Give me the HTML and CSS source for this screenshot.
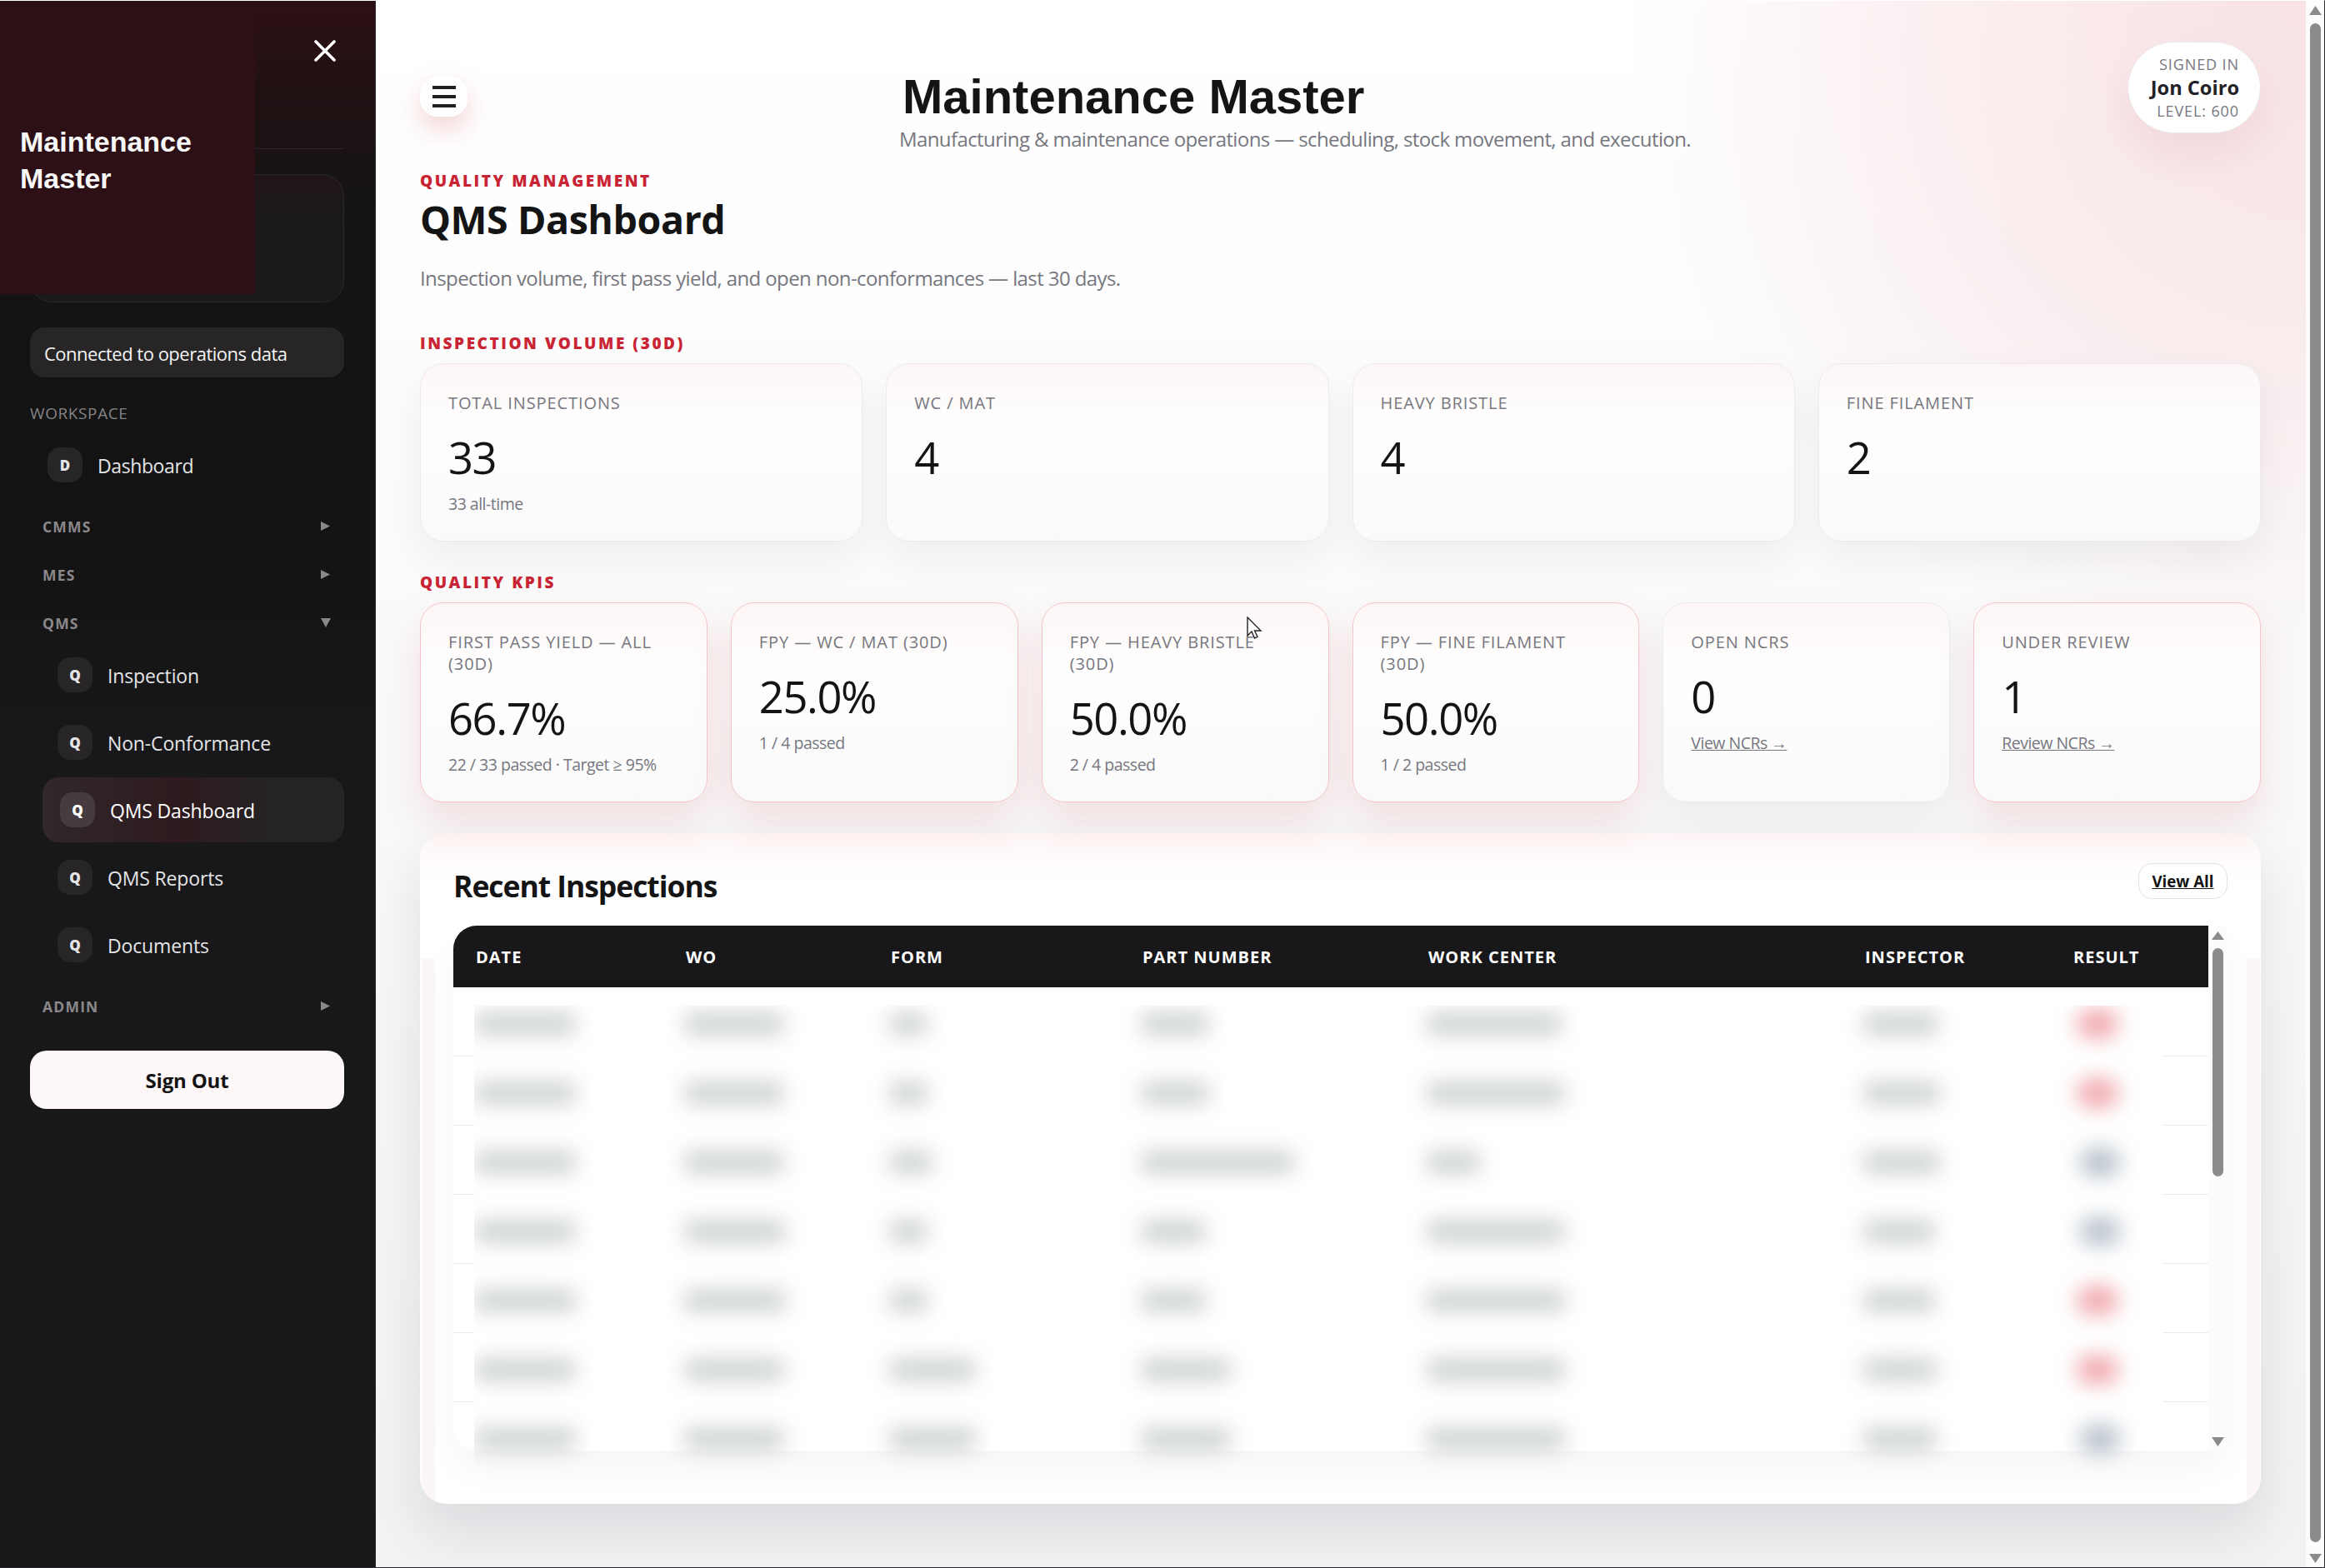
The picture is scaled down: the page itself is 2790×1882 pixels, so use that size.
FILE: index.html
```html
<!DOCTYPE html>
<html lang="en">
<head>
    <meta charset="UTF-8">
    <meta name="viewport" content="width=device-width, initial-scale=1.0">
    <title>QMS Dashboard</title>
    <link rel="stylesheet" href="styles.css">
</head>
<body>
    <aside class="sidebar">
        <div class="sidebar-head">
            <svg class="close" width="26" height="26" viewBox="0 0 26 26"><path d="M2 2L24 24M24 2L2 24"/></svg>
        </div>
        <div class="sidebar-card"></div>
        <div class="brand">Maintenance Master</div>
        <div class="status">Connected to operations data</div>
        <div class="nav-title">WORKSPACE</div>
        <a class="nav-item top"><span class="badge">D</span><span>Dashboard</span></a>
        <div class="nav-group"><span>CMMS</span><svg width="12" height="12"><path d="M0 0L11 5.5L0 11Z"/></svg></div>
        <div class="nav-group"><span>MES</span><svg width="12" height="12"><path d="M0 0L11 5.5L0 11Z"/></svg></div>
        <div class="nav-group"><span>QMS</span><svg width="12" height="12"><path d="M0 0H12L6 11Z"/></svg></div>
        <nav class="nav-list">
            <a class="nav-item"><span class="badge">Q</span><span>Inspection</span></a>
            <a class="nav-item"><span class="badge">Q</span><span>Non-Conformance</span></a>
            <a class="nav-item active"><span class="badge">Q</span><span>QMS Dashboard</span></a>
            <a class="nav-item"><span class="badge">Q</span><span>QMS Reports</span></a>
            <a class="nav-item"><span class="badge">Q</span><span>Documents</span></a>
        </nav>
        <div class="nav-group"><span>ADMIN</span><svg width="12" height="12"><path d="M0 0L11 5.5L0 11Z"/></svg></div>
        <button class="sign-out">Sign Out</button>
    </aside>

    <main class="main">
        <header class="topbar">
            <button class="menu"><span></span><span></span><span></span></button>
            <div class="heading">
                <h1>Maintenance Master</h1>
                <p>Manufacturing &amp; maintenance operations — scheduling, stock movement, and execution.</p>
            </div>
            <div class="user">
                <small>SIGNED IN</small>
                <b>Jon Coiro</b>
                <small>LEVEL: 600</small>
            </div>
        </header>

        <div class="kicker">QUALITY MANAGEMENT</div>
        <h2>QMS Dashboard</h2>
        <p class="lead">Inspection volume, first pass yield, and open non-conformances — last 30 days.</p>

        <div class="kicker volume">INSPECTION VOLUME (30D)</div>
        <section class="cards four">
            <div class="card"><label>TOTAL INSPECTIONS</label><strong>33</strong><em>33 all-time</em></div>
            <div class="card"><label>WC / MAT</label><strong>4</strong></div>
            <div class="card"><label>HEAVY BRISTLE</label><strong>4</strong></div>
            <div class="card"><label>FINE FILAMENT</label><strong>2</strong></div>
        </section>

        <div class="kicker kpis">QUALITY KPIS</div>
        <section class="cards six">
            <div class="card warn"><label>FIRST PASS YIELD — ALL (30D)</label><strong>66.7%</strong><em>22 / 33 passed · Target ≥ 95%</em></div>
            <div class="card warn"><label>FPY — WC / MAT (30D)</label><strong>25.0%</strong><em>1 / 4 passed</em></div>
            <div class="card warn"><label>FPY — HEAVY BRISTLE (30D)</label><strong>50.0%</strong><em>2 / 4 passed</em></div>
            <div class="card warn"><label>FPY — FINE FILAMENT (30D)</label><strong>50.0%</strong><em>1 / 2 passed</em></div>
            <div class="card"><label>OPEN NCRS</label><strong>0</strong><em><a>View NCRs →</a></em></div>
            <div class="card warn"><label>UNDER REVIEW</label><strong>1</strong><em><a>Review NCRs →</a></em></div>
        </section>

        <section class="panel">
            <div class="panel-head">
                <h3>Recent Inspections</h3>
                <a class="view-all">View All</a>
            </div>
            <div class="table-wrap">
                <div class="table">
                    <div class="row head">
                        <span>DATE</span><span>WO</span><span>FORM</span><span>PART NUMBER</span><span>WORK CENTER</span><span>INSPECTOR</span><span>RESULT</span>
                    </div>
                    <div class="table-body">
                        <div class="redacted" id="rows"></div>
                    </div>
                </div>
                <div class="scroll inner">
                    <svg width="15" height="11"><path d="M7.5 0L15 10H0Z"/></svg>
                    <i></i>
                    <svg width="15" height="11"><path d="M7.5 11L15 0H0Z"/></svg>
                </div>
            </div>
        </section>
    </main>

    <div class="scroll page">
        <svg width="15" height="11"><path d="M7.5 0L15 11H0Z"/></svg>
        <i></i>
        <svg width="15" height="11"><path d="M7.5 11L15 0H0Z"/></svg>
    </div>

    <svg class="cursor" width="20" height="28" viewBox="0 0 20 28"><path d="M1 1V23L6 18L9.5 26L13 24.5L9.5 17H17Z"/></svg>

    <script>
        // bar widths per column, last value is the result pill
        const rows = [
            [122, 120, 46, 82, 162, 90, 'fail'],
            [122, 120, 46, 82, 166, 92, 'fail'],
            [122, 120, 52, 184, 64, 92, 'pass'],
            [122, 122, 46, 78, 166, 86, 'pass'],
            [122, 122, 46, 78, 166, 86, 'fail'],
            [122, 120, 104, 108, 166, 88, 'fail'],
            [122, 120, 104, 108, 166, 88, 'pass']
        ];

        const body = document.getElementById('rows');

        rows.forEach(row => {
            const div = document.createElement('div');
            div.classList.add('row');
            div.innerHTML = row.map(v => typeof v === 'number'
                ? `<span><i class="bar" style="width:${v}px"></i></span>`
                : `<span><i class="pill ${v}"></i></span>`).join('');
            body.appendChild(div);
        });
    </script>
</body>
</html>
```
FILE: styles.css
```css
* {
    box-sizing: border-box;
}
body {
    margin: 0;
    height: 1882px;
    display: flex;
    overflow: hidden;
    border-top: 1px solid #fff;
    border-right: 1px solid #2a2a2e;
    border-bottom: 1px solid #2a2a2e;
    font-family: "Open Sans", "Noto Sans", sans-serif;
    color: #141414;
    background: #fff;
}
h1, h2, h3, p {
    margin: 0;
}
button {
    border: none;
    padding: 0;
    font-family: inherit;
}

/* Sidebar */
.sidebar {
    position: relative;
    flex: 0 0 450px;
    padding: 0 37px 0 36px;
    border-right: 1px solid #2c2c2e;
    background: linear-gradient(180deg, #2d1015 0, #1f1113 120px, #141414 250px, #131313 660px, #18181a 900px, #18181a 100%);
}
.sidebar-head {
    height: 178px;
    border-bottom: 1px solid #2b2627;
    text-align: right;
}
.close {
    margin: 47px 10px 0 0;
    fill: none;
    stroke: #fff;
    stroke-width: 3.6;
    stroke-linecap: round;
}
.sidebar-card {
    height: 154px;
    margin-top: 30px;
    border: 1px solid #29292b;
    border-radius: 26px;
    background: linear-gradient(180deg, #21161a, #1a1a1c 40%);
}
.brand {
    position: absolute;
    left: 0;
    top: 0;
    width: 306px;
    height: 352px;
    padding: 147px 50px 0 24px;
    background: #2d1015;
    color: #f8f8f8;
    font: bold 34px/44px "Liberation Sans", Arial, sans-serif;
}
.status {
    height: 60px;
    margin-top: 30px;
    padding-left: 17px;
    border-radius: 18px;
    background: #272526;
    color: #f5f5f5;
    font-size: 22px;
    line-height: 62px;
    letter-spacing: -0.5px;
}
.nav-title {
    margin: 30px 0 10px;
    color: #858387;
    font-size: 19px;
    line-height: 26px;
    letter-spacing: 0.6px;
}
.nav-item {
    display: flex;
    align-items: center;
    gap: 18px;
    height: 78px;
    padding-left: 18px;
    border-radius: 20px;
    color: #e4e4e7;
    font-size: 23px;
    letter-spacing: -0.15px;
    white-space: nowrap;
}
.nav-item.top {
    padding-left: 21px;
    margin-bottom: 10px;
    letter-spacing: -0.4px;
}
.nav-item span + span {
    padding-top: 2px;
}
.badge {
    width: 42px;
    height: 42px;
    border-radius: 15px;
    background: #272526;
    font-size: 17px;
    font-weight: 800;
    line-height: 43px;
    letter-spacing: 0;
    text-align: center;
}
.nav-group {
    display: flex;
    align-items: center;
    justify-content: space-between;
    height: 48px;
    margin-bottom: 10px;
    padding: 1px 16px 0 15px;
    color: #8a888b;
    font-size: 17.5px;
    font-weight: 700;
    letter-spacing: 1.2px;
}
.nav-group svg {
    fill: #8a888b;
}
.nav-list {
    display: grid;
    gap: 3px;
    margin: -10px 0 10px 15px;
}
.nav-item.active {
    padding-left: 21px;
    background: linear-gradient(90deg, #30282a, #2e1a1e 45%, #252324 75%, #262526);
    color: #fff;
}
.active .badge {
    background: #463b3f;
}
.sign-out {
    width: 377px;
    height: 70px;
    margin-top: 20px;
    border-radius: 20px;
    background: #fdf7f7;
    color: #141414;
    font-size: 24px;
    font-weight: 700;
    letter-spacing: -0.2px;
}

/* Main */
.main {
    flex: 1;
    padding: 49px 54px 0 53px;
    background:
        radial-gradient(circle 820px at 100% 0, rgba(205, 50, 65, 0.14), rgba(205, 50, 65, 0.075) 55%, transparent),
        linear-gradient(180deg, #fff 0, #fbfbfb 600px, #f1f2f3 100%);
}
.topbar {
    display: flex;
    align-items: flex-start;
    height: 154px;
}
.menu {
    display: grid;
    gap: 7px;
    align-content: center;
    justify-content: center;
    width: 57px;
    height: 48px;
    margin-top: 42px;
    border-radius: 21px;
    background: #fff;
    box-shadow: 0 14px 32px rgba(201, 36, 52, 0.2);
}
.menu span {
    width: 28px;
    height: 4px;
    background: #202022;
}
.heading {
    margin: 33px 0 0 518px;
}
h1 {
    padding-left: 4px;
    font: bold 58px/66px "Liberation Sans", Arial, sans-serif;
}
.heading p, .lead {
    color: #77777f;
    font-size: 24px;
    line-height: 36px;
    letter-spacing: -0.6px;
    white-space: nowrap;
}
.user {
    display: grid;
    align-content: center;
    justify-items: end;
    width: 160px;
    height: 110px;
    margin-left: auto;
    padding-right: 25px;
    border: 1px solid #ebe6e7;
    border-radius: 55px;
    background: #fff;
    box-shadow: 0 24px 48px rgba(160, 30, 45, 0.08);
    line-height: 28px;
    white-space: nowrap;
}
.user small {
    color: #77777f;
    font-size: 18px;
    letter-spacing: 0.9px;
}
.user b {
    color: #222226;
    font-size: 23.6px;
}
.kicker {
    color: #c92434;
    font-size: 19px;
    font-weight: 800;
    line-height: 26px;
    letter-spacing: 2.55px;
}
h2 {
    margin-top: 3px;
    font-size: 46.5px;
    line-height: 60px;
    letter-spacing: -0.4px;
}
.lead {
    margin-top: 23px;
}
.kicker.volume {
    margin-top: 47px;
}
.kicker.kpis {
    margin-top: 36px;
}

/* Cards */
.cards {
    display: grid;
    gap: 28px;
    margin-top: 11px;
}
.four {
    grid-template-columns: repeat(4, 1fr);
    grid-auto-rows: 214px;
}
.six {
    grid-template-columns: repeat(6, 1fr);
    grid-auto-rows: 240px;
}
.card {
    padding: 34px 30px 0 33px;
    border: 1px solid #ebebed;
    border-radius: 28px;
    background: linear-gradient(180deg, #fef6f6 0, #fefefe 34%, #fafafa 100%);
    box-shadow: 0 18px 44px rgba(20, 30, 45, 0.06);
}
.card.warn {
    border-color: #f4c6ca;
    box-shadow: 0 22px 48px rgba(201, 36, 52, 0.12);
}
.card label {
    display: block;
    color: #77777f;
    font-size: 20px;
    line-height: 26px;
    letter-spacing: 0.9px;
}
.card strong {
    display: block;
    margin-top: 20px;
    font-size: 52.5px;
    font-weight: 400;
    line-height: 64px;
    letter-spacing: -1.4px;
}
.card em {
    display: block;
    margin-top: 10px;
    color: #77777f;
    font-size: 19.5px;
    font-style: normal;
    line-height: 28px;
    letter-spacing: -0.5px;
}
.card a {
    text-decoration: underline;
}

/* Recent inspections */
.panel {
    height: 805px;
    margin-top: 37px;
    padding: 36px 40px 0;
    border-radius: 32px;
    background:
        linear-gradient(#fdf6f6, #fdf6f6) 2px 150px / 16px 100% no-repeat,
        linear-gradient(#fdf6f6, #fdf6f6) calc(100% - 1px) 150px / 16px 100% no-repeat,
        linear-gradient(180deg, #fef6f6 0, #fff 60px);
    box-shadow: 0 30px 64px rgba(20, 30, 45, 0.11);
}
.panel-head {
    display: flex;
    justify-content: space-between;
    height: 75px;
}
h3 {
    margin-top: 2px;
    font-size: 35.5px;
    line-height: 50px;
    letter-spacing: -1.05px;
}
.view-all {
    width: 107px;
    height: 43px;
    border: 1px solid #e3e3e5;
    border-radius: 16px;
    background: #fff;
    font-size: 18.7px;
    font-weight: 700;
    line-height: 42px;
    text-align: center;
    text-decoration: underline;
    white-space: nowrap;
}
.table-wrap {
    display: flex;
    width: 2129px;
    height: 630px;
    border-radius: 28px 0 28px 28px;
    box-shadow: 0 24px 44px rgba(20, 20, 30, 0.035);
}
.table {
    width: 2106px;
}
.row {
    display: grid;
    grid-template-columns: 252px 246px 302px 343px 524px 250px 162px;
    align-items: center;
    height: 83px;
}
.row.head {
    height: 74px;
    padding: 1px 0 0 27px;
    border-radius: 28px 0 0 0;
    background: #18181a;
    color: #fff;
    font-size: 20px;
    font-weight: 700;
    letter-spacing: 1px;
}
.table-body {
    height: 556px;
    padding: 22px 54px 0 25px;
    border-radius: 0 0 0 28px;
    background:
        repeating-linear-gradient(180deg, transparent 0 82px, #ebebed 82px 83px) 0 0 / 25px 100% no-repeat,
        repeating-linear-gradient(180deg, transparent 0 82px, #ebebed 82px 83px) 100% 0 / 54px 100% no-repeat,
        #fff;
}
.redacted {
    height: 580px;
    overflow: hidden;
}
.redacted .row {
    transform: translateY(-20px);
}
.bar {
    display: block;
    height: 26px;
    border-radius: 6px;
    background: #ccd0d1;
    filter: blur(13px);
}
.pill {
    display: block;
    width: 50px;
    height: 34px;
    margin-left: 6px;
    border-radius: 17px;
    filter: blur(13px);
}
.pill.fail {
    background: #f0a5aa;
}
.pill.pass {
    margin-left: 9px;
    background: #b7c0ca;
}

/* Scrollbars */
.scroll {
    display: flex;
    flex-direction: column;
    align-items: center;
    background: #fcfcfc;
}
.scroll svg {
    fill: #8b8b8d;
}
.scroll i {
    width: 13px;
    border-radius: 7px;
    background: #8b8b8d;
}
.scroll.inner {
    width: 23px;
    padding: 7px 0 5px;
}
.inner i {
    height: 274px;
    margin: 9px 0 auto;
}
.scroll.page {
    flex: 0 0 22px;
    padding: 6px 0 5px;
}
.page i {
    height: 1823px;
    margin: 10px 0 auto;
}
.cursor {
    position: absolute;
    left: 1496px;
    top: 740px;
    fill: #fff;
    stroke: #222;
    stroke-width: 1.4;
}
```
